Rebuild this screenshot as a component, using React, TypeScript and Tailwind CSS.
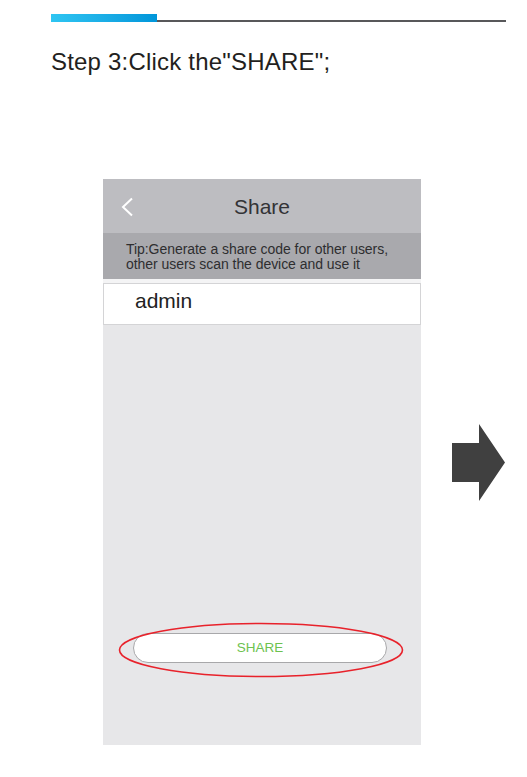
import React from "react";

function ShareScreen() {
  return (
    <div className="relative flex h-[566px] w-[318px] flex-col bg-[#e7e7e9]">
      <div className="relative flex h-[54px] items-center justify-center bg-[#bdbdc1]">
        <svg
          className="absolute left-[17px] top-[18px]"
          width="14"
          height="20"
          viewBox="0 0 14 20"
          fill="none"
        >
          <path d="M12 1.5 L3 10 L12 18.5" stroke="#ffffff" strokeWidth="2" />
        </svg>
        <span className="text-[21px] leading-[21px] text-[#333336]">Share</span>
      </div>
      <div className="h-[46px] bg-[#a9a9ad] pl-[23px] pt-[9px] text-[14px] leading-[15px] tracking-[-0.05px] text-[#2e2e30]">
        <p>Tip:Generate a share code for other users,</p>
        <p>other users scan the device and use it</p>
      </div>
      <div className="h-[4px] bg-[#f4f4f5]" />
      <div className="h-[42px] border border-[#d4d4d6] bg-white pl-[31px] pt-[6px] text-[21px] leading-[21px] text-[#222]">
        admin
      </div>
      <div className="flex-1" />
      <div className="mb-[82px] ml-[30px] flex h-[30px] w-[254px] items-center justify-center rounded-full border-[1.5px] border-[#a8a8aa] bg-white text-[13.5px] text-[#6cc24f]">
        SHARE
      </div>
      <svg
        className="pointer-events-none absolute left-[15px] top-[443px]"
        width="286"
        height="56"
        viewBox="0 0 286 56"
        fill="none"
      >
        <ellipse cx="143" cy="28" rx="141.5" ry="26.5" stroke="#e8222b" strokeWidth="1.6" />
      </svg>
    </div>
  );
}

function NextArrow() {
  return (
    <svg width="53" height="77" viewBox="0 0 53 77">
      <path d="M0 19 H27 V0 L53 38.5 L27 77 V58 H0 Z" fill="#404040" />
    </svg>
  );
}

export default function App() {
  return (
    <div
      className="min-h-[777px] w-[527px] bg-white"
      style={{ fontFamily: '"Liberation Sans", Arial, sans-serif' }}
    >
      <div className="flex items-end pl-[51px] pr-[21px] pt-[14px]">
        <div className="h-[8px] w-[106px] bg-gradient-to-r from-[#2ec5f2] to-[#0096da]" />
        <div className="h-[2px] flex-1 bg-[#58585a]" />
      </div>
      <p className="ml-[51px] mt-[28px] text-[24px] leading-[24px] tracking-[0.2px] text-[#231f20]">
        Step 3:Click the"SHARE";
      </p>
      <div className="mt-[105px] flex items-center gap-[31px] pl-[103px]">
        <ShareScreen />
        <NextArrow />
      </div>
    </div>
  );
}
